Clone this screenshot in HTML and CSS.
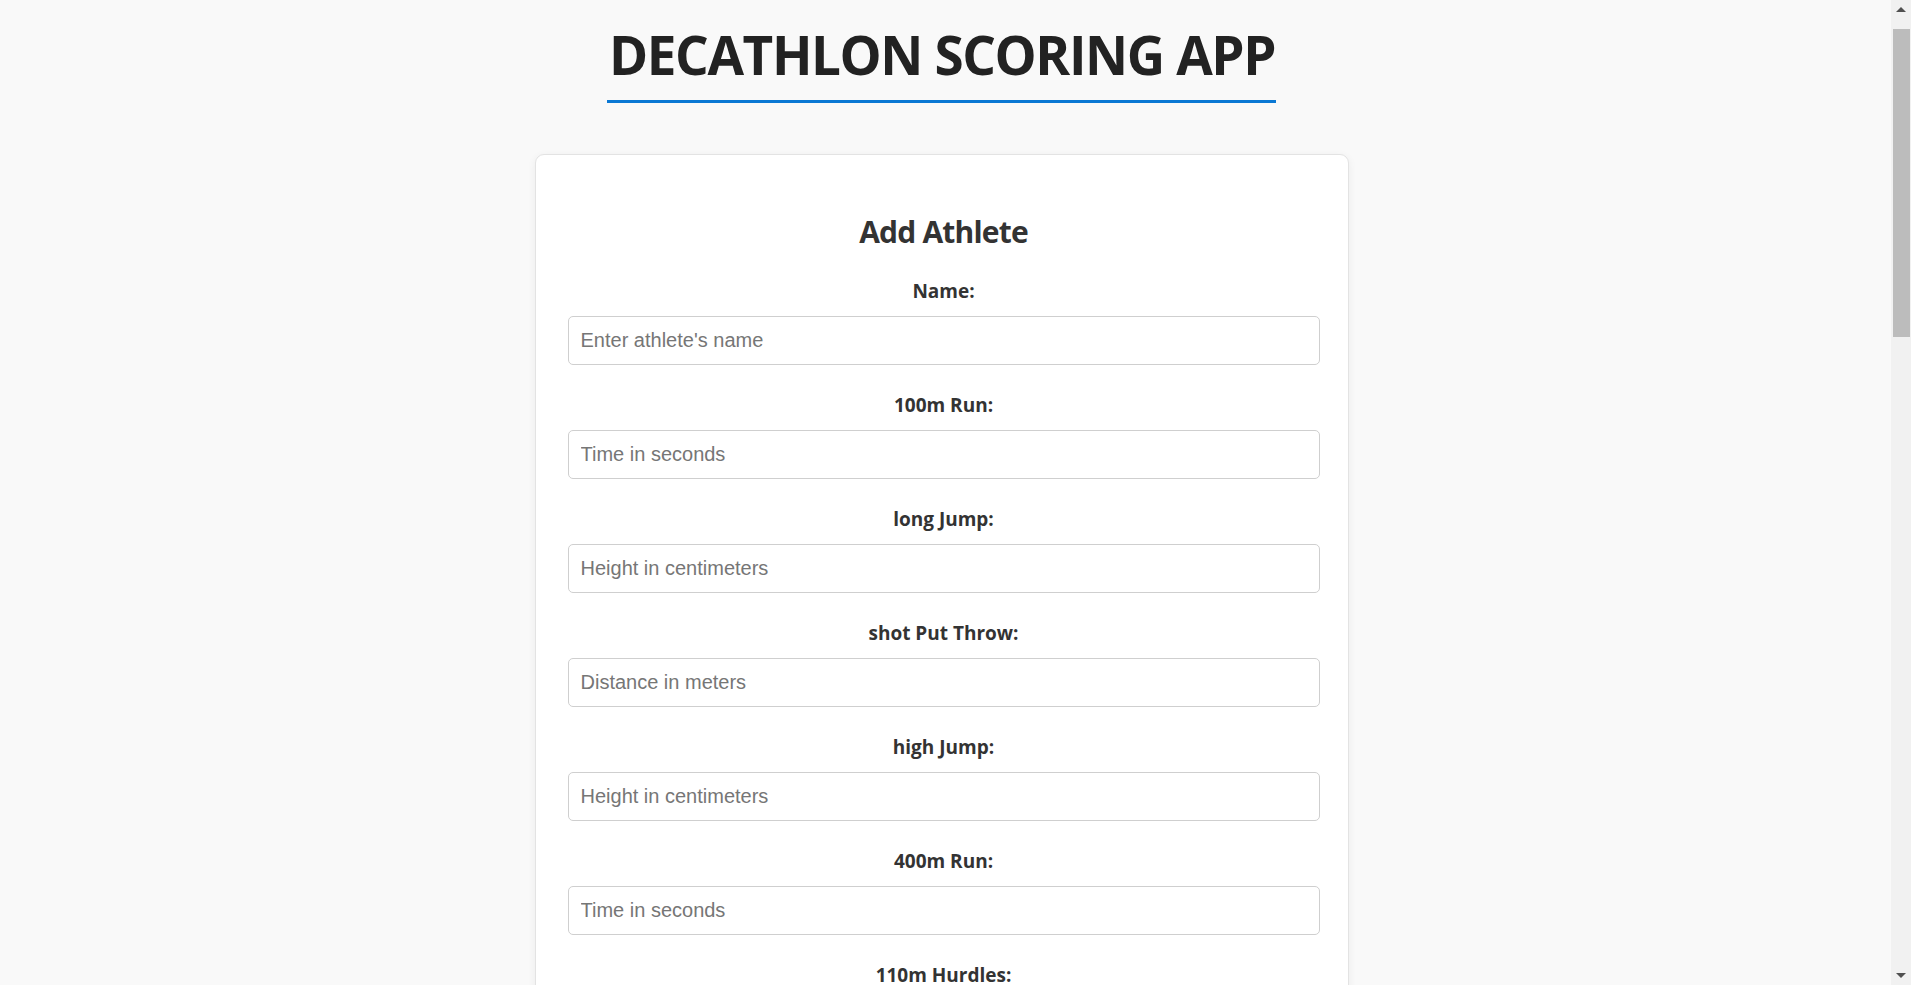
FILE: index.html
```html
<!DOCTYPE html>
<html lang="en">
<head>
<meta charset="UTF-8">
<title>Decathlon Scoring App</title>
<link rel="stylesheet" href="styles.css">
</head>
<body>
<header class="page-header">
  <h1 class="title">DECATHLON SCORING APP</h1>
</header>
<main class="page">
  <section class="card">
    <h2 class="card-title">Add Athlete</h2>
    <form class="athlete-form">
      <div class="field"><label class="field-label" for="name">Name:</label><input class="field-input" id="name" type="text" placeholder="Enter athlete's name"></div>
      <div class="field"><label class="field-label" for="run100">100m Run:</label><input class="field-input" id="run100" type="text" placeholder="Time in seconds"></div>
      <div class="field"><label class="field-label" for="longJump">long Jump:</label><input class="field-input" id="longJump" type="text" placeholder="Height in centimeters"></div>
      <div class="field"><label class="field-label" for="shotPut">shot Put Throw:</label><input class="field-input" id="shotPut" type="text" placeholder="Distance in meters"></div>
      <div class="field"><label class="field-label" for="highJump">high Jump:</label><input class="field-input" id="highJump" type="text" placeholder="Height in centimeters"></div>
      <div class="field"><label class="field-label" for="run400">400m Run:</label><input class="field-input" id="run400" type="text" placeholder="Time in seconds"></div>
      <div class="field"><label class="field-label" for="hurdles">110m Hurdles:</label><input class="field-input" id="hurdles" type="text" placeholder="Time in seconds"></div>
      <div class="field"><label class="field-label" for="discus">discus Throw:</label><input class="field-input" id="discus" type="text" placeholder="Distance in meters"></div>
      <div class="field"><label class="field-label" for="poleVault">pole Vault:</label><input class="field-input" id="poleVault" type="text" placeholder="Height in centimeters"></div>
      <div class="field"><label class="field-label" for="javelin">javelin Throw:</label><input class="field-input" id="javelin" type="text" placeholder="Distance in meters"></div>
      <div class="field"><label class="field-label" for="run1500">1500m Run:</label><input class="field-input" id="run1500" type="text" placeholder="Time in seconds"></div>
      <button class="submit-btn" type="button">Add Athlete</button>
    </form>
  </section>
  <section class="card results">
    <h2 class="card-title">Standings</h2>
    <table class="standings">
      <thead><tr><th>Rank</th><th>Name</th><th>Total Points</th></tr></thead>
      <tbody></tbody>
    </table>
    <button class="submit-btn" type="button">Export CSV</button>
  </section>
</main>
<div class="fake-scrollbar" aria-hidden="true">
  <span class="sb-arrow sb-up"></span>
  <span class="sb-thumb"></span>
  <span class="sb-arrow sb-down"></span>
</div>
</body>
</html>
```
FILE: styles.css
```css
html {
  background: #f9f9f9;
}
body {
  margin: 0;
  background: #f9f9f9;
  font-family: "Open Sans", "Noto Sans", sans-serif;
  color: #333;
  padding-right: 28px;
}
.page-header {
  text-align: center;
  padding-top: 17px;
}
.title {
  display: inline-block;
  margin: 0;
  font-size: 53px;
  line-height: 76px;
  letter-spacing: -1.4px;
  font-weight: 700;
  color: #222;
  padding: 0 1px 7px 2px;
  border-bottom: 3px solid #0a78d4;
}
.page {
  display: flex;
  flex-direction: column;
  align-items: center;
  gap: 40px;
  padding: 51px 0 60px;
}
.card {
  box-sizing: border-box;
  width: 814px;
  background: #fff;
  border: 1px solid #e3e3e3;
  border-radius: 9px;
  box-shadow: 0 2px 8px rgba(0, 0, 0, 0.06);
  padding: 32px 28px 40px 32px;
}
.card-title {
  margin: 24px 0 26px;
  text-align: center;
  font-size: 30px;
  line-height: 41px;
  letter-spacing: -0.8px;
  font-weight: 700;
  color: #333;
}
.athlete-form {
  display: flex;
  flex-direction: column;
}
.field {
  display: flex;
  flex-direction: column;
  margin-bottom: 27px;
}
.field-label {
  display: block;
  text-align: center;
  font-size: 19px;
  line-height: 26px;
  font-weight: 700;
  color: #333;
  margin-bottom: 12px;
}
.field-input {
  box-sizing: border-box;
  width: 100%;
  height: 49px;
  margin: 0;
  padding: 0 12px;
  border: 1px solid #cfcfcf;
  border-radius: 5px;
  background: #fff;
  font-family: "Liberation Sans", Arial, sans-serif;
  font-size: 20px;
  color: #333;
  outline: none;
}
.field-input::placeholder {
  color: #767676;
}
.submit-btn {
  align-self: center;
  margin-top: 8px;
  padding: 12px 32px;
  border: none;
  border-radius: 5px;
  background: #0a78d4;
  color: #fff;
  font-family: "Open Sans", sans-serif;
  font-size: 19px;
  font-weight: 700;
}
.results {
  display: flex;
  flex-direction: column;
  min-height: 1250px;
}
.standings {
  width: 100%;
  border-collapse: collapse;
  font-size: 18px;
  margin-bottom: 24px;
}
.standings th {
  text-align: left;
  padding: 12px;
  border-bottom: 2px solid #0a78d4;
}

/* drawn scrollbar (overlay on the right edge) */
.fake-scrollbar {
  position: fixed;
  top: 0;
  right: 0;
  width: 20px;
  height: 100vh;
  background: #f1f1f1;
  display: flex;
  flex-direction: column;
  align-items: center;
}
.sb-arrow {
  display: block;
  width: 0;
  height: 0;
  border-left: 5px solid transparent;
  border-right: 5px solid transparent;
}
.sb-up {
  margin-top: 7px;
  border-bottom: 5px solid #505050;
}
.sb-thumb {
  display: block;
  margin-top: 17px;
  margin-left: 1px;
  width: 17px;
  height: 308px;
  background: #bcbcbc;
}
.sb-down {
  margin-top: auto;
  margin-bottom: 7px;
  border-top: 5px solid #505050;
}
```
